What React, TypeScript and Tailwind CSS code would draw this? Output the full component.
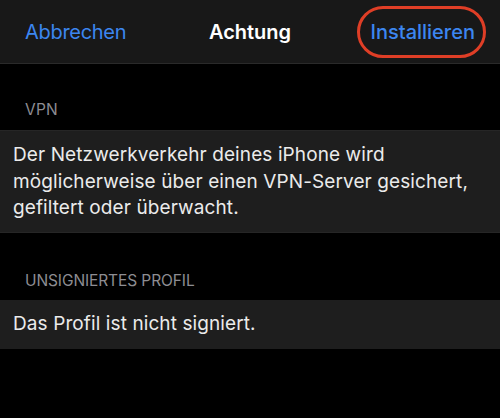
import React from "react";

export default function App() {
  return (
    <div
      className="w-[500px] h-[418px] bg-black flex flex-col overflow-hidden"
      style={{ fontFamily: "Inter, 'Noto Sans', sans-serif" }}
    >
      <div className="h-[64px] shrink-0 bg-[#181818] border-b border-[#2a2a2a] flex items-center justify-between px-[25px] relative">
        <span className="text-[20px] text-[#3c86f0] tracking-[-0.3px]">Abbrechen</span>
        <span className="absolute left-1/2 -translate-x-1/2 text-[20px] font-semibold text-white">Achtung</span>
        <div className="relative">
          <span className="text-[20px] font-medium text-[#3c86f0]">Installieren</span>
          <div className="absolute left-[-13px] right-[-11px] top-[-11px] bottom-[-11px] rounded-full border-[3px] border-[#df3e26]" />
        </div>
      </div>
      <div className="h-[66px] shrink-0 flex items-end px-[25px] pb-[9px]">
        <span className="text-[15.5px] text-[#8d8d92] tracking-[0.2px]">VPN</span>
      </div>
      <div className="h-[103px] shrink-0 bg-[#1e1e1e] border-y border-[#262626] px-[13px] pt-[11px] text-[19px] leading-[26.5px] text-[#ebebeb] tracking-[0.1px]">
        Der Netzwerkverkehr deines iPhone wird möglicherweise über einen VPN-Server gesichert, gefiltert oder überwacht.
      </div>
      <div className="h-[67px] shrink-0 flex items-end px-[25px] pb-[8px]">
        <span className="text-[15.5px] text-[#8d8d92] tracking-[-0.1px]">UNSIGNIERTES PROFIL</span>
      </div>
      <div className="bg-[#1e1e1e] h-[49px] shrink-0 flex items-center px-[13px] text-[19px] text-[#ebebeb] tracking-[0.1px]">
        Das Profil ist nicht signiert.
      </div>
    </div>
  );
}
